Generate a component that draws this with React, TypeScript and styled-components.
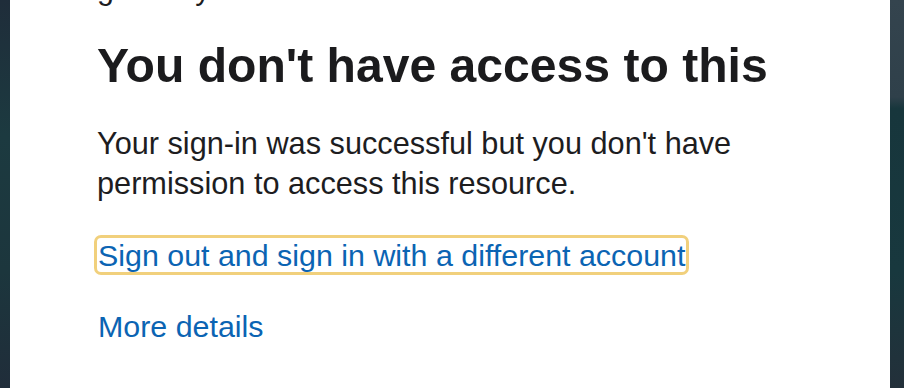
import React from 'react';
import styled, { createGlobalStyle } from 'styled-components';

const GlobalStyle = createGlobalStyle`
  html, body {
    margin: 0;
    padding: 0;
    height: 100%;
    overflow: hidden;
  }
  body {
    background: linear-gradient(180deg, #1f2d3a 0%, #1c3a40 35%, #1c363d 70%, #202d3a 100%);
    font-family: "Liberation Sans", Arial, Helvetica, sans-serif;
  }
  #root {
    height: 100%;
  }
`;

const Page = styled.div`
  display: flex;
  height: 388px;
  padding: 0 14px 0 10px;
  box-sizing: border-box;
`;

const RightEdge = styled.div`
  position: fixed;
  top: 0;
  right: 0;
  width: 14px;
  height: 388px;
  background: linear-gradient(180deg, #34444e 0%, #2f404a 25%, #17363c 28%, #18383e 70%, #23303a 100%);
`;

const Card = styled.main`
  flex: 1;
  background: #ffffff;
  padding: 0 80px 0 87px;
  overflow: hidden;
`;

const Clipped = styled.p`
  margin: -32px 0 0;
  font-size: 30.5px;
  line-height: 40px;
  color: #1d1d1f;
`;

const Title = styled.h1`
  margin: 29px 0 0;
  font-size: 48.1px;
  line-height: 56px;
  font-weight: 700;
  color: #1b1b1d;
`;

const Message = styled.p`
  margin: 31px 0 0;
  font-size: 30.7px;
  line-height: 40px;
  color: #1d1d1f;
  max-width: 680px;
`;

const LinkRow = styled.div<{ $gap: number }>`
  margin-top: ${(p) => p.$gap}px;
  font-size: 30.4px;
  line-height: 40px;
`;

const Link = styled.a<{ $focused?: boolean }>`
  color: #0b64b3;
  text-decoration: none;
  border-radius: 4px;
  padding: 0 1px;
  outline: ${(p) => (p.$focused ? '3px solid #f1d07c' : 'none')};
  outline-offset: 0;
  cursor: pointer;
`;

export default function App() {
  return (
    <>
      <GlobalStyle />
      <Page>
        <Card>
          <Clipped>gateway</Clipped>
          <Title>You don't have access to this</Title>
          <Message>
            Your sign-in was successful but you don't have permission to access this resource.
          </Message>
          <LinkRow $gap={31}>
            <Link href="#" $focused>
              Sign out and sign in with a different account
            </Link>
          </LinkRow>
          <LinkRow $gap={31}>
            <Link href="#">More details</Link>
          </LinkRow>
        </Card>
      </Page>
      <RightEdge />
    </>
  );
}
